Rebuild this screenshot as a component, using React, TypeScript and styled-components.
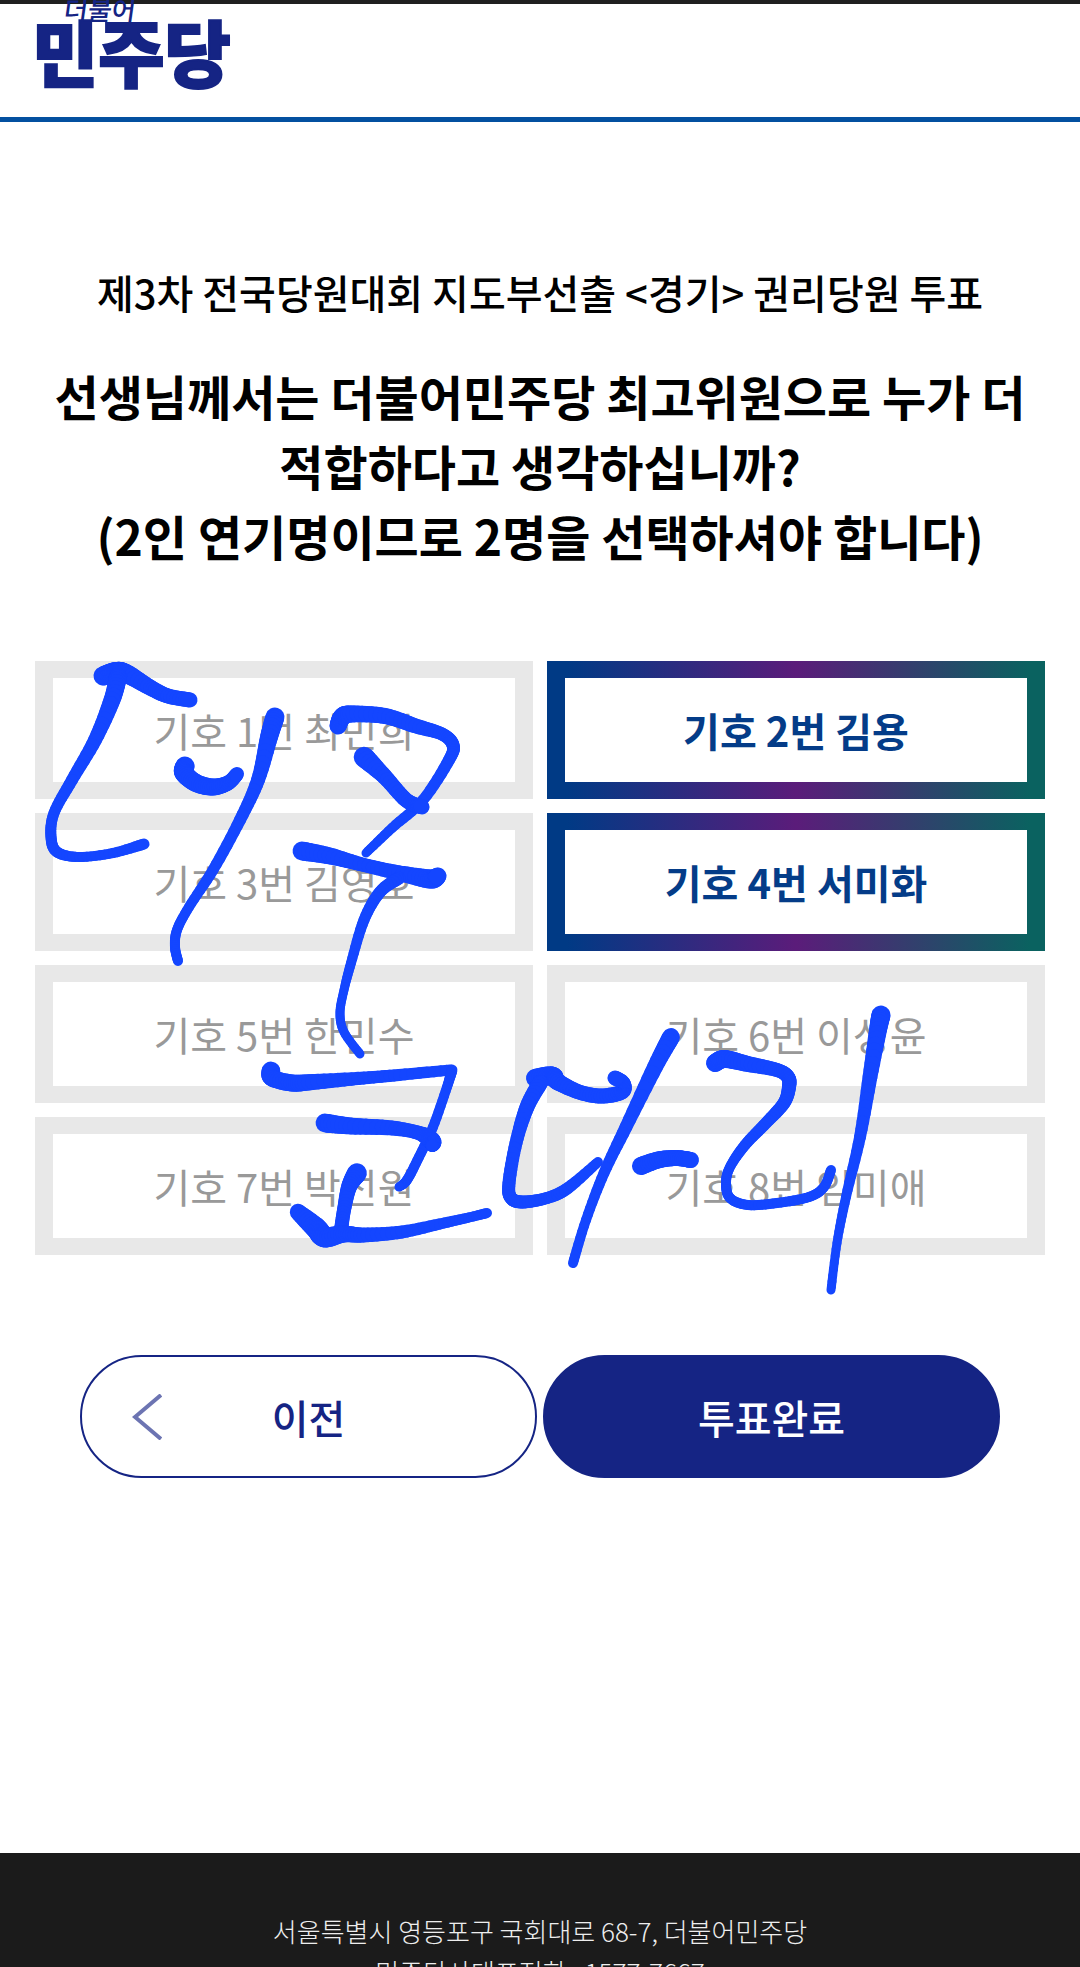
import React, { useState } from "react";
import styled, { createGlobalStyle } from "styled-components";

const navy = "#152484";

const GlobalStyle = createGlobalStyle`
  *, *::before, *::after { box-sizing: border-box; }
  body {
    margin: 0;
    background: #fff;
    color: #000;
    font-family: "Noto Sans CJK KR", "Noto Sans", sans-serif;
  }
`;

const Page = styled.div`
  height: 100vh;
  overflow: hidden;
  display: flex;
  flex-direction: column;
  & > * { flex-shrink: 0; }
`;

const Header = styled.header`
  height: 122px;
  padding: 0 35px;
  border-top: 4px solid #1f1f1f;
  border-bottom: 5px solid #0350a0;
`;

const LogoLink = styled.a`
  display: block;
  width: 200px;
`;

const Logo = styled.svg`
  display: block;
  overflow: visible;
`;

const Main = styled.main`
  display: flex;
  flex-direction: column;
  padding: 140px 35px 375px;
`;

const Subtitle = styled.h1`
  margin: 0;
  font-size: 40px;
  line-height: 60px;
  font-weight: 500;
  text-align: center;
  word-break: keep-all;
`;

const Question = styled.h2`
  margin: 38px 0 0;
  font-size: 48px;
  line-height: 70px;
  font-weight: 700;
  text-align: center;
  word-break: keep-all;
`;

const Ballot = styled.form`
  margin-top: 91px;
`;

const OptionArea = styled.fieldset`
  position: relative;
  display: grid;
  grid-template-columns: 1fr 1fr;
  gap: 14px;
  margin: 0;
  padding: 0;
  border: 0;
  min-width: 0;
`;

const Option = styled.label<{ $selected: boolean }>`
  display: flex;
  height: 138px;
  padding: 17px 18px;
  cursor: pointer;
  background: ${(p) =>
    p.$selected ? "linear-gradient(90deg, #003a85 4%, #5b1c7a 50%, #0a6260 97%)" : "#e8e8e8"};
`;

const OptionInput = styled.input`
  position: absolute;
  opacity: 0;
  pointer-events: none;
`;

const OptionText = styled.span<{ $selected: boolean }>`
  flex: 1;
  display: flex;
  align-items: center;
  justify-content: center;
  background: #fff;
  font-size: 40px;
  line-height: 60px;
  font-weight: ${(p) => (p.$selected ? 700 : 400)};
  color: ${(p) => (p.$selected ? "#043c88" : "#999")};
`;

const Scribble = styled.svg`
  position: absolute;
  top: 0;
  left: 0;
  width: 100%;
  overflow: visible;
  pointer-events: none;
`;

const Actions = styled.div`
  display: grid;
  grid-template-columns: 1fr 1fr;
  gap: 6px;
  margin: 100px 45px 0;
`;

const ActionButton = styled.button<{ $primary?: boolean }>`
  position: relative;
  height: 123px;
  border: 2px solid ${navy};
  border-radius: 62px;
  background: ${(p) => (p.$primary ? navy : "#fff")};
  color: ${(p) => (p.$primary ? "#fff" : navy)};
  font-family: inherit;
  font-size: 40px;
  line-height: 60px;
  font-weight: 500;
  cursor: pointer;
`;

const BackIcon = styled.svg`
  position: absolute;
  left: 50px;
  top: 50%;
  margin-top: -23px;
`;

const Footer = styled.footer`
  padding: 57px 35px 60px;
  background: #1b1b1b;
  color: #eee;
  font-size: 26px;
  line-height: 41px;
  font-weight: 300;
  text-align: center;
`;

const Address = styled.address`
  font-style: normal;
`;

type Point = [x: number, y: number, width: number];

/* Pen strokes: each point carries the nib width at that place. */
const strokes: Point[][] = [
  [[103, 676, 18], [116, 672, 19], [127, 674, 18], [151, 688, 15], [168, 696, 14], [190, 700, 14]],
  [[118, 677, 17], [112, 700, 16], [95, 740, 13], [72, 780, 11], [54, 813, 10], [51, 837, 10], [57, 852, 10], [79, 857, 9], [113, 853, 9], [144, 844, 10]],
  [[185, 766, 18], [184, 773, 18], [196, 783, 17], [213, 787, 16], [228, 783, 14], [237, 774, 13]],
  [[275, 717, 18], [269, 737, 17], [258, 780, 13], [240, 820, 11], [213, 870, 10], [189, 907, 9], [177, 930, 9], [175, 947, 9], [178, 961, 9]],
  [[338, 726, 16], [342, 717, 17], [351, 714, 16], [385, 716, 15], [416, 726, 14], [442, 734, 12], [453, 745, 12], [449, 760, 11], [423, 800, 10], [392, 828, 9], [366, 853, 8]],
  [[364, 757, 20], [385, 777, 15], [406, 800, 14], [422, 807, 14]],
  [[302, 851, 18], [330, 856, 16], [364, 865, 13], [399, 873, 14], [430, 879, 18], [438, 876, 16]],
  [[399, 878, 12], [380, 892, 11], [364, 920, 10], [351, 963, 9], [344, 990, 8], [340, 1013, 8], [344, 1032, 8], [360, 1054, 8]],
  [[271, 1071, 18], [272, 1078, 16], [292, 1083, 16], [313, 1082, 15], [364, 1078, 12], [399, 1075, 11], [450, 1070, 10]],
  [[452, 1070, 10], [447, 1087, 9], [433, 1127, 9], [419, 1157, 9], [407, 1180, 9], [399, 1187, 8]],
  [[325, 1123, 18], [351, 1126, 16], [392, 1128, 14], [419, 1133, 13], [432, 1141, 17], [432, 1146, 11]],
  [[357, 1173, 19], [349, 1187, 15], [344, 1210, 13], [341, 1230, 13]],
  [[298, 1212, 15], [316, 1228, 20], [325, 1237, 20], [344, 1234, 16], [364, 1235, 14], [402, 1232, 12], [444, 1223, 10], [471, 1217, 9], [487, 1213, 9]],
  [[535, 1078, 17], [552, 1076, 18], [558, 1082, 16], [579, 1092, 14], [601, 1096, 14], [622, 1092, 14], [624, 1083, 12], [615, 1078, 14]],
  [[540, 1083, 15], [527, 1107, 14], [516, 1143, 12], [509, 1183, 12], [511, 1198, 12], [523, 1202, 12], [547, 1198, 11], [568, 1188, 11], [598, 1162, 9]],
  [[671, 1037, 17], [655, 1067, 15], [626, 1127, 12], [604, 1173, 10], [586, 1220, 9], [573, 1263, 9]],
  [[641, 1166, 17], [658, 1160, 16], [676, 1158, 15], [691, 1160, 15]],
  [[715, 1063, 17], [725, 1059, 17], [748, 1064, 15], [777, 1070, 13], [788, 1077, 13], [789, 1087, 13], [784, 1103, 12], [766, 1123, 11], [745, 1145, 10], [730, 1167, 9], [726, 1183, 9], [730, 1198, 9], [748, 1205, 9], [777, 1203, 9], [809, 1197, 9], [824, 1187, 9], [831, 1170, 9]],
  [[881, 1015, 18], [878, 1030, 17], [870, 1077, 14], [860, 1137, 11], [846, 1197, 9], [837, 1243, 8], [831, 1290, 8]],
];

/* Catmull-Rom interpolation through the pen points, width included. */
function smooth(points: Point[], steps = 8): Point[] {
  const out: Point[] = [];
  for (let i = 0; i < points.length - 1; i++) {
    const a = points[Math.max(0, i - 1)];
    const b = points[i];
    const c = points[i + 1];
    const d = points[Math.min(points.length - 1, i + 2)];
    for (let s = 0; s < steps; s++) {
      const t = s / steps;
      out.push(
        [0, 1, 2].map(
          (k) =>
            0.5 *
            (2 * b[k] +
              (c[k] - a[k]) * t +
              (2 * a[k] - 5 * b[k] + 4 * c[k] - d[k]) * t * t +
              (3 * b[k] - a[k] - 3 * c[k] + d[k]) * t * t * t)
        ) as Point
      );
    }
  }
  out.push(points[points.length - 1]);
  return out;
}

function PenStroke({ points }: { points: Point[] }) {
  const path = smooth(points);
  return (
    <g>
      {path.slice(1).map(([x, y, w], i) => (
        <line key={i} x1={path[i][0]} y1={path[i][1]} x2={x} y2={y} strokeWidth={w + 1} />
      ))}
    </g>
  );
}

const candidates = ["최민희", "김용", "김영호", "서미화", "한민수", "이성윤", "박선원", "임미애"];

export default function App() {
  const [picked, setPicked] = useState<number[]>([2, 4]);

  const toggle = (n: number) =>
    setPicked((list) =>
      list.includes(n) ? list.filter((v) => v !== n) : list.length < 2 ? [...list, n] : list
    );

  return (
    <Page>
      <GlobalStyle />
      <Header>
        <LogoLink href="#" aria-label="더불어민주당">
          <Logo width="200" height="100" viewBox="0 0 200 100" fill={navy}>
            <text x="-3" y="77" fontSize="72" fontWeight="900" stroke={navy} strokeWidth="2">
              민주당
            </text>
            <text x="30" y="16" fontSize="26" fontWeight="500" transform="skewX(-8)">
              더불어
            </text>
          </Logo>
        </LogoLink>
      </Header>

      <Main>
        <Subtitle>제3차 전국당원대회 지도부선출 &lt;경기&gt; 권리당원 투표</Subtitle>
        <Question>
          선생님께서는 더불어민주당 최고위원으로 누가 더 적합하다고 생각하십니까?
          <br />
          (2인 연기명이므로 2명을 선택하셔야 합니다)
        </Question>

        <Ballot onSubmit={(e) => e.preventDefault()}>
          <OptionArea aria-label="최고위원 후보">
            {candidates.map((name, i) => {
              const number = i + 1;
              const selected = picked.includes(number);
              return (
                <Option key={name} $selected={selected}>
                  <OptionInput
                    type="checkbox"
                    name="candidate"
                    value={number}
                    checked={selected}
                    onChange={() => toggle(number)}
                  />
                  <OptionText $selected={selected}>
                    기호 {number}번 {name}
                  </OptionText>
                </Option>
              );
            })}
            <Scribble
              viewBox="35 661 1010 594"
              fill="none"
              stroke="#1446ff"
              strokeLinecap="round"
              aria-hidden="true"
            >
              {strokes.map((points, i) => (
                <PenStroke key={i} points={points} />
              ))}
            </Scribble>
          </OptionArea>

          <Actions>
            <ActionButton type="button">
              <BackIcon width="30" height="46" viewBox="0 0 30 46" fill="none" aria-hidden="true">
                <path d="M29 1 L3 23 L29 45" stroke="#6c74b2" strokeWidth="4" />
              </BackIcon>
              이전
            </ActionButton>
            <ActionButton type="submit" $primary>
              투표완료
            </ActionButton>
          </Actions>
        </Ballot>
      </Main>

      <Footer>
        <Address>
          서울특별시 영등포구 국회대로 68-7, 더불어민주당
          <br />
          민주당사대표전화 : 1577-7667
        </Address>
      </Footer>
    </Page>
  );
}
